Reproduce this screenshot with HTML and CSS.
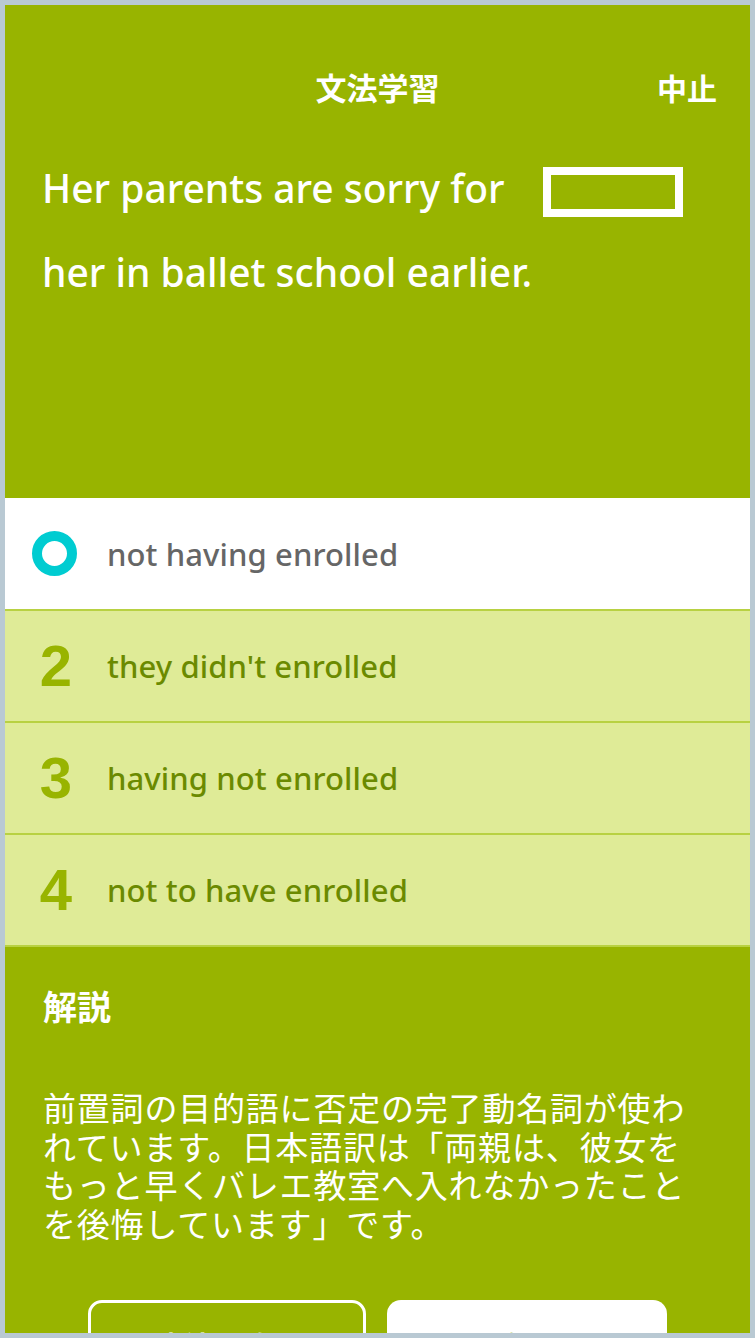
FILE: index.html
```html
<!DOCTYPE html>
<html lang="ja">
<head>
<meta charset="utf-8">
<title>文法学習</title>
<link rel="stylesheet" href="styles.css">
</head>
<body>
<div class="app">
  <header class="header">
    <div class="topbar">
      <span class="spacer"></span>
      <h1 class="title">文法学習</h1>
      <span class="quit">中止</span>
    </div>
    <p class="question">Her parents are sorry for <span class="blank"></span> her in ballet school earlier.</p>
  </header>
  <ul class="options">
    <li class="option selected">
      <span class="marker"><span class="ring"></span></span>
      <span class="opt-text">not having enrolled</span>
    </li>
    <li class="option">
      <span class="marker"><span class="num">2</span></span>
      <span class="opt-text">they didn't enrolled</span>
    </li>
    <li class="option">
      <span class="marker"><span class="num">3</span></span>
      <span class="opt-text">having not enrolled</span>
    </li>
    <li class="option">
      <span class="marker"><span class="num">4</span></span>
      <span class="opt-text">not to have enrolled</span>
    </li>
  </ul>
  <section class="explain">
    <h2 class="explain-title">解説</h2>
    <p class="explain-text">前置詞の目的語に否定の完了動名詞が使われています。日本語訳は「両親は、彼女をもっと早くバレエ教室へ入れなかったことを後悔しています」です。</p>
    <div class="buttons">
      <button class="btn btn-outline">文法を確認</button>
      <button class="btn btn-solid">次へ</button>
    </div>
  </section>
</div>
</body>
</html>
```

FILE: styles.css
```css
html, body {
  margin: 0;
  padding: 0;
}
body {
  width: 755px;
  height: 1338px;
  overflow: hidden;
  background: #b9c9d3;
  font-family: "Noto Sans", "Noto Sans CJK JP", sans-serif;
}
.app {
  margin: 5px 5px 0 5px;
  height: 1328px;
  overflow: hidden;
  background: #98b400;
  color: #ffffff;
}
.header {
  height: 493px;
  box-sizing: border-box;
}
.topbar {
  display: grid;
  grid-template-columns: 1fr auto 1fr;
  align-items: center;
  padding-top: 62px;
  height: 40px;
}
.title {
  margin: 0;
  font-family: "Noto Sans CJK JP", sans-serif;
  font-size: 31px;
  font-weight: 700;
  line-height: 40px;
}
.quit {
  justify-self: end;
  padding-right: 33px;
  font-family: "Noto Sans CJK JP", sans-serif;
  font-size: 30px;
  font-weight: 700;
  line-height: 40px;
}
.question {
  margin: 39px 0 0 0;
  padding: 0 43px 0 37px;
  font-size: 39px;
  font-weight: 500;
  line-height: 84px;
}
.blank {
  display: inline-block;
  width: 124px;
  height: 34px;
  border: 8px solid #ffffff;
  vertical-align: middle;
  margin-left: 28px;
}
.options {
  list-style: none;
  margin: 0;
  padding: 0;
}
.option {
  display: flex;
  align-items: center;
  height: 110px;
  border-bottom: 2px solid #b8d142;
  background: #dfeb97;
  padding-left: 26px;
}
.option.selected {
  background: #ffffff;
  height: 111px;
}
.marker {
  width: 46px;
  display: flex;
  justify-content: center;
  align-items: center;
  margin-right: 30px;
}
.ring {
  width: 25px;
  height: 25px;
  border: 10px solid #00ccd1;
  border-radius: 50%;
}
.num {
  font-family: "Liberation Sans", Arial, sans-serif;
  font-weight: 700;
  font-size: 58px;
  line-height: 1;
  color: #98b400;
  margin-left: 4px;
}
.opt-text {
  font-size: 31px;
  font-weight: 500;
  color: #6b8a00;
  letter-spacing: 0.1px;
}
.option.selected .opt-text {
  color: #666666;
}
.explain {
  padding: 0 43px 0 38px;
}
.explain-title {
  margin: 39px 0 0 0;
  font-family: "Noto Sans CJK JP", sans-serif;
  font-size: 34px;
  font-weight: 700;
  line-height: 40px;
}
.explain-text {
  margin: 62px 0 0 0;
  font-family: "Noto Sans CJK JP", sans-serif;
  font-size: 33px;
  letter-spacing: 0.8px;
  line-height: 38.6px;
  font-weight: 400;
  width: 664px;
}
.buttons {
  display: flex;
  justify-content: center;
  gap: 21px;
  margin: 58px 0 0 -38px;
  width: 745px;
}
.btn {
  height: 90px;
  border-radius: 14px;
  font-family: "Noto Sans CJK JP", sans-serif;
  font-size: 28px;
  font-weight: 700;
  padding: 0;
  box-sizing: border-box;
}
.btn-outline {
  width: 278px;
  background: transparent;
  border: 3px solid #ffffff;
  color: #ffffff;
}
.btn-solid {
  width: 280px;
  background: #ffffff;
  border: none;
  color: #98b400;
}
```
